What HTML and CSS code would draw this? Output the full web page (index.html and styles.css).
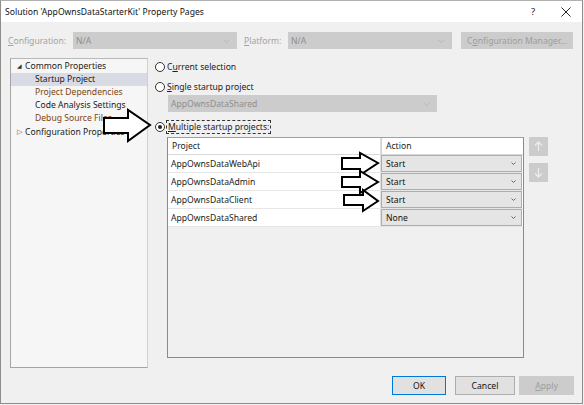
FILE: index.html
```html
<!DOCTYPE html>
<html>
<head>
<meta charset="utf-8">
<link rel="stylesheet" href="styles.css">
</head>
<body>
<div class="window">
  <div class="titlebar">
    <span class="title">Solution 'AppOwnsDataStarterKit' Property Pages</span>
    <span class="help">?</span>
    <svg class="close" width="10" height="10" viewBox="0 0 10 10"><path d="M0.5 0.5 L9.5 9.5 M9.5 0.5 L0.5 9.5" stroke="#222" stroke-width="1" fill="none"/></svg>
  </div>

  <div class="toprow">
    <span class="lbl lbl-config"><u>C</u>onfiguration:</span>
    <div class="combo dis combo-top"><span>N/A</span><svg class="chev" width="7" height="4" viewBox="0 0 7 4"><path d="M0.5 0.5 L3.5 3.5 L6.5 0.5" stroke="#b8b8b8" fill="none"/></svg></div>
    <span class="lbl lbl-plat"><u>P</u>latform:</span>
    <div class="combo dis combo-top"><span>N/A</span><svg class="chev" width="7" height="4" viewBox="0 0 7 4"><path d="M0.5 0.5 L3.5 3.5 L6.5 0.5" stroke="#b8b8b8" fill="none"/></svg></div>
    <div class="btn dis btn-cfg">C<u>o</u>nfiguration Manager...</div>
  </div>

  <div class="main">
    <div class="tree">
      <div class="node lvl0"><span class="exp">◢</span>Common Properties</div>
      <div class="node lvl1 sel">Startup Project</div>
      <div class="node lvl1 brown">Project Dependencies</div>
      <div class="node lvl1">Code Analysis Settings</div>
      <div class="node lvl1 brown">Debug Source Files</div>
      <div class="node lvl0"><span class="col">▷</span>Configuration Properties</div>
    </div>

    <div class="right">
      <div class="radio r1"><span class="circle"></span><span class="rlabel">C<u>u</u>rrent selection</span></div>
      <div class="radio r2"><span class="circle"></span><span class="rlabel"><u>S</u>ingle startup project</span></div>
      <div class="combo dis combo-single"><span>AppOwnsDataShared</span><svg class="chev" width="7" height="4" viewBox="0 0 7 4"><path d="M0.5 0.5 L3.5 3.5 L6.5 0.5" stroke="#b8b8b8" fill="none"/></svg></div>
      <div class="radio r3"><span class="circle on"></span><span class="rlabel focus"><u>M</u>ultiple startup projects:</span></div>

      <div class="gridrow">
        <div class="grid">
          <div class="grow head">
            <div class="cproj">Project</div>
            <div class="cact">Action</div>
          </div>
          <div class="grow">
            <div class="cproj">AppOwnsDataWebApi</div>
            <div class="cact"><div class="combo act"><span>Start</span><svg class="chev" width="5" height="3" viewBox="0 0 5 3"><path d="M0.5 0.5 L2.5 2.5 L4.5 0.5" stroke="#666" fill="none"/></svg></div></div>
          </div>
          <div class="grow">
            <div class="cproj">AppOwnsDataAdmin</div>
            <div class="cact"><div class="combo act"><span>Start</span><svg class="chev" width="5" height="3" viewBox="0 0 5 3"><path d="M0.5 0.5 L2.5 2.5 L4.5 0.5" stroke="#666" fill="none"/></svg></div></div>
          </div>
          <div class="grow">
            <div class="cproj">AppOwnsDataClient</div>
            <div class="cact"><div class="combo act"><span>Start</span><svg class="chev" width="5" height="3" viewBox="0 0 5 3"><path d="M0.5 0.5 L2.5 2.5 L4.5 0.5" stroke="#666" fill="none"/></svg></div></div>
          </div>
          <div class="grow">
            <div class="cproj">AppOwnsDataShared</div>
            <div class="cact"><div class="combo act"><span>None</span><svg class="chev" width="5" height="3" viewBox="0 0 5 3"><path d="M0.5 0.5 L2.5 2.5 L4.5 0.5" stroke="#666" fill="none"/></svg></div></div>
          </div>
        </div>
        <div class="updown">
          <div class="ubtn"><svg width="9" height="11" viewBox="0 0 9 11"><path d="M4.5 1 L4.5 10 M1 4.5 L4.5 1 L8 4.5" stroke="#ececec" stroke-width="1.3" fill="none"/></svg></div>
          <div class="ubtn"><svg width="9" height="11" viewBox="0 0 9 11"><path d="M4.5 1 L4.5 10 M1 6.5 L4.5 10 L8 6.5" stroke="#ececec" stroke-width="1.3" fill="none"/></svg></div>
        </div>
      </div>
    </div>
  </div>

  <div class="footer">
    <div class="btn ok">OK</div>
    <div class="btn cancel">Cancel</div>
    <div class="btn dis apply"><u>A</u>pply</div>
  </div>

  <svg class="arrows" width="584" height="405" viewBox="0 0 584 405">
    <path d="M104 118 L128 118 L128 110 L150 125 L128 141 L128 133 L104 133 Z" fill="#fff" stroke="#000" stroke-width="2" stroke-linejoin="miter"/>
    <path d="M342 158 L360 158 L360 153 L378 163 L360 175 L360 169 L342 169 Z" fill="#fff" stroke="#000" stroke-width="2"/>
    <path d="M342 177 L360 177 L360 171 L378 182 L360 193 L360 187 L342 187 Z" fill="#fff" stroke="#000" stroke-width="2"/>
    <path d="M344 195 L363 195 L363 190 L378 201 L363 211 L363 205 L344 205 Z" fill="#fff" stroke="#000" stroke-width="2"/>
  </svg>
</div>
</body>
</html>
```

FILE: styles.css
```css
* { box-sizing: border-box; }
html, body { margin: 0; padding: 0; background: #f0f0f0; }
body {
  font-family: "Noto Sans", "Open Sans", sans-serif;
  font-size: 8.6px;
  color: #1a1a1a;
}
u { text-decoration: underline; text-underline-offset: 1px; }

.window {
  position: relative;
  width: 583px;
  height: 404px;
  border: 1px solid #8d8d8d;
  border-top-color: #b0b0b0;
  background: #f0f0f0;
  overflow: hidden;
}

.titlebar {
  height: 21px;
  background: #fff;
  display: flex;
  align-items: center;
  padding-left: 4px;
}
.title { flex: 1; color: #111; }
.help { width: 10px; margin-right: 20px; font-size: 9.5px; color: #222; }
.close { margin-right: 11px; }

.toprow {
  display: flex;
  align-items: center;
  height: 17px;
  margin-top: 10px;
  padding-left: 7px;
}
.lbl { color: #a2a2a2; white-space: nowrap; }
.lbl-config { width: 65px; }
.lbl-plat { width: 44px; margin-left: 7px; }

.combo {
  position: relative;
  display: flex;
  align-items: center;
  height: 17px;
  padding-left: 3px;
  white-space: nowrap;
}
.combo .chev { position: absolute; right: 7px; top: 7px; }
.dis { background: #cccccc; color: #8e8e8e; }
.combo-top { width: 164px; }

.btn {
  display: flex;
  align-items: center;
  justify-content: center;
  height: 17px;
  background: #e1e1e1;
  border: 1px solid #adadad;
  color: #111;
  white-space: nowrap;
}
.btn.dis { background: #cccccc; border-color: #cccccc; color: #9d9d9d; }
.btn-cfg { width: 112px; margin-left: 9px; }

.main {
  display: flex;
  margin-top: 9px;
  padding-left: 9px;
}

.tree {
  width: 138px;
  height: 310px;
  background: #f6f6f6;
  border: 1px solid #a5a5a5;
  border-right-color: #d0d0d0;
  border-top-color: #b8b8b8;
  padding: 1px 0 0 0;
}
.node {
  height: 13px;
  line-height: 13px;
  white-space: nowrap;
  color: #1a1a1a;
}
.lvl0 { padding-left: 6px; }
.lvl1 { padding-left: 24px; }
.sel { background: #d9dbe4; }
.brown { color: #7a4412; }
.exp { display: inline-block; width: 8px; font-size: 6px; color: #333; vertical-align: 1px; }
.col { display: inline-block; width: 8px; font-size: 7px; color: #555; vertical-align: 1px; }

.right {
  margin-left: 7px;
  display: flex;
  flex-direction: column;
}
.radio {
  display: flex;
  align-items: center;
  height: 13px;
}
.r1 { margin-top: 2px; }
.r2 { margin-top: 7px; }
.r3 { margin-top: 8px; }
.circle {
  width: 10px;
  height: 10px;
  border: 1px solid #333;
  border-radius: 50%;
  background: #fff;
  margin-right: 2px;
  position: relative;
}
.circle.on::after {
  content: "";
  position: absolute;
  left: 2px; top: 2px;
  width: 4px; height: 4px;
  border-radius: 50%;
  background: #222;
}
.rlabel { white-space: nowrap; }
.focus { outline: 1px dashed #333; outline-offset: 0; padding: 0 1px; }

.combo-single {
  width: 269px;
  margin-top: 2px;
  margin-left: 13px;
  color: #8e8e8e;
}

.gridrow {
  display: flex;
  margin-top: 4px;
  margin-left: 12px;
}
.grid {
  width: 357px;
  height: 221px;
  border: 1px solid #8a8a8a;
  border-top-color: #a0a0a0;
  background: #f0f0f0;
}
.grow {
  display: flex;
  height: 18px;
  border-bottom: 1px solid #e6e6e6;
  background: #fff;
}
.grow.head { height: 17px; border-bottom-color: #d8d8d8; }
.cproj {
  width: 213px;
  padding-left: 3px;
  display: flex;
  align-items: center;
  border-right: 1px solid #e0e0e0;
  white-space: nowrap;
}
.head .cproj { padding-left: 4px; }
.cact {
  flex: 1;
  display: flex;
  align-items: center;
}
.head .cact { padding-left: 4px; border-left: 1px solid #d0d0d0; }
.combo.act {
  width: 141px;
  height: 17px;
  background: #e5e5e5;
  border: 1px solid #adadad;
  padding-left: 4px;
  color: #111;
}
.combo.act .chev { right: 5px; top: 6px; }

.updown {
  margin-left: 5px;
  display: flex;
  flex-direction: column;
  gap: 7px;
}
.ubtn {
  width: 19px;
  height: 19px;
  background: #cccccc;
  display: flex;
  align-items: center;
  justify-content: center;
}

.footer {
  display: flex;
  justify-content: flex-end;
  margin-top: 8px;
  padding-right: 8px;
}
.footer .btn { height: 19px; }
.ok { width: 54px; border-color: #0078d7; }
.cancel { width: 60px; margin-left: 9px; }
.apply { width: 55px; margin-left: 4px; }

.arrows { position: absolute; left: -1px; top: -1px; pointer-events: none; }
```
